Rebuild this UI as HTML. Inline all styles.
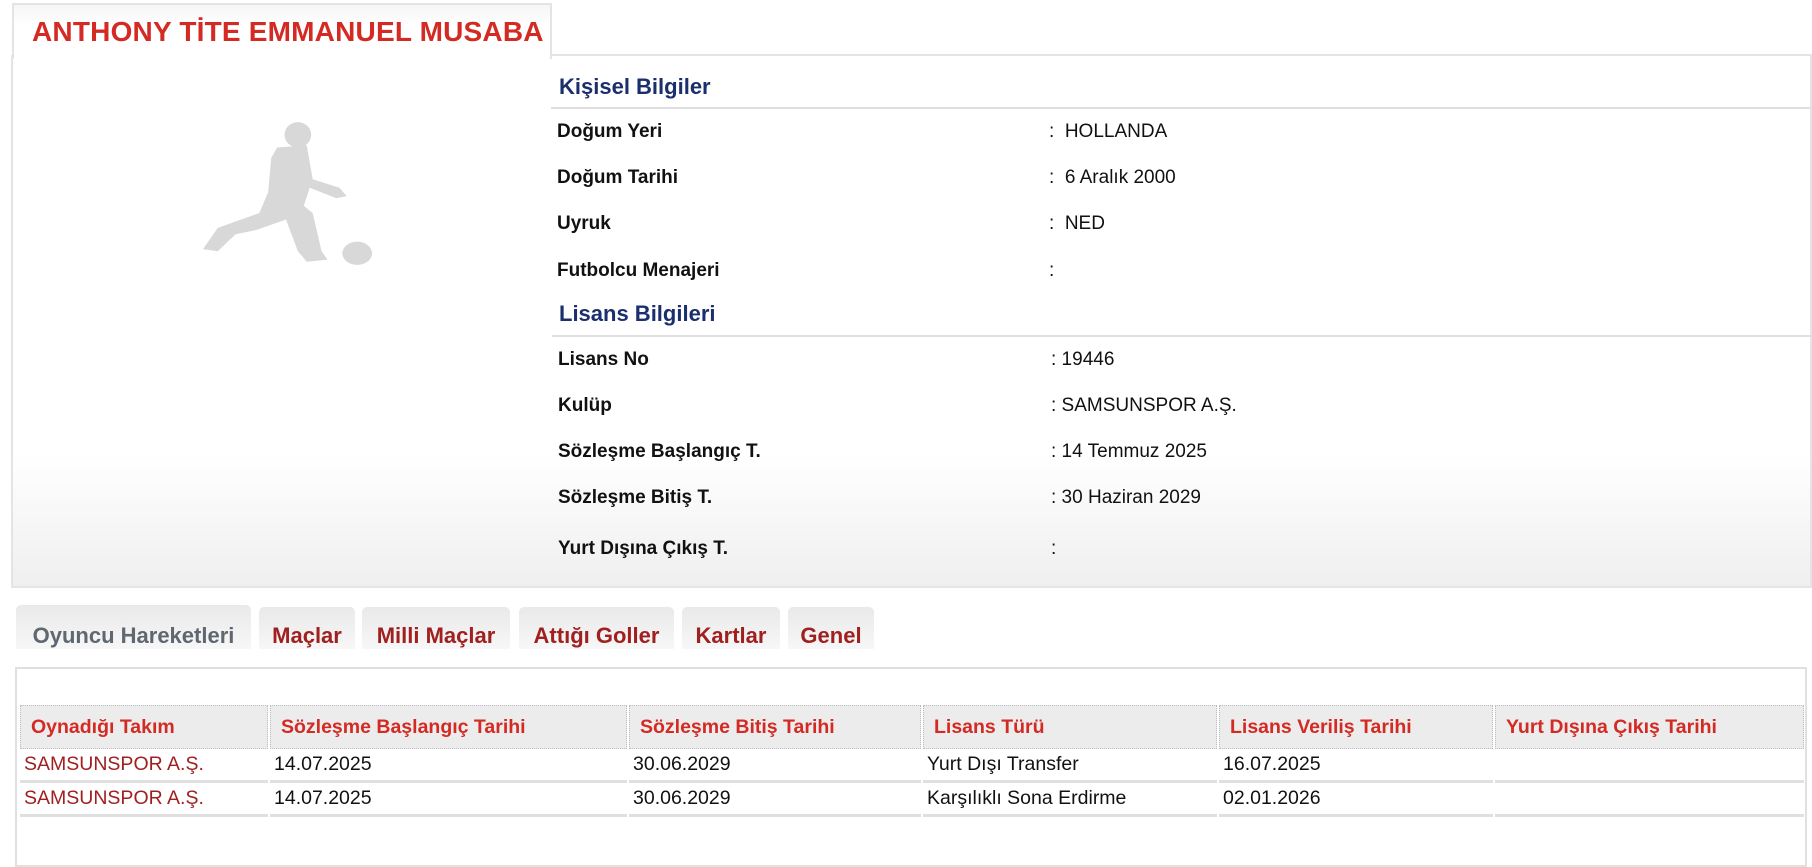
<!DOCTYPE html>
<html><head><meta charset="utf-8"><style>
*{margin:0;padding:0;box-sizing:border-box}
body{width:1812px;height:850px;background:#fff;font-family:"Liberation Sans",Arial,sans-serif;position:relative;overflow:hidden}
.a{position:absolute;white-space:nowrap}
.title{left:12px;top:3px;width:540px;height:56px;border:2px solid #e4e4e4;border-bottom:none;background:linear-gradient(#f6f6f6,#fff 40%);z-index:2}
.title span{position:absolute;left:18px;top:11px;font-weight:bold;color:#d32a23;font-size:28px;letter-spacing:0.2px}
.box{left:11px;top:55px;width:1801px;height:533px;border:2px solid #e4e4e4;border-top:none;background:linear-gradient(#fff 0%,#fff 75%,#efefef 100%)}
.boxtop{left:550px;top:54px;width:1262px;height:2px;background:#e4e4e4}
.h{font-size:22px;font-weight:bold;color:#1b2f6e}
.line{height:2px;background:#e0e0e0}
.l{font-size:19px;font-weight:bold;color:#111}
.v{font-size:19px;color:#111}
.tab{top:607px;height:42px;background:linear-gradient(#e9e9e9,#f7f7f7);border-radius:5px 5px 0 0;font-weight:bold;font-size:22px;color:#a02020;text-align:center;padding-top:16px}
.tbox{left:15px;top:667px;width:1792px;height:200px;border:2px solid #e0e0e0}
table{position:absolute;left:18px;top:705px;border-collapse:separate;border-spacing:2px 0;width:1788px}
th{height:44px;background:#ececec;border:1px dotted #bdbdbd;color:#d32a23;font-size:19.5px;text-align:left;padding-left:10px;font-weight:bold}
td{height:34px;border-bottom:3px solid #e0e0e0;font-size:19.5px;color:#111;padding-left:4px}
td.r{color:#a02020}
</style></head><body>
<div class="a box"></div>
<div class="a boxtop"></div>
<div class="a title"><span>ANTHONY TİTE EMMANUEL MUSABA</span></div>
<svg class="a" style="left:200px;top:120px" width="172" height="146" viewBox="46 4 116 138" preserveAspectRatio="none">
<g fill="#d8d8d8">
<ellipse cx="112" cy="18" rx="9" ry="12"/>
<path d="M98 30 L118 28 L122 60 L140 68 L145 76 L138 78 L120 68 L116 85 L122 92 L128 128 L132 136 L118 138 L112 128 L104 98 L84 108 L70 112 L58 128 L48 126 L58 106 L66 102 L86 92 L92 72 L94 40 Z"/>
<ellipse cx="152" cy="130" rx="10" ry="11"/>
</g></svg>
<div class="a h" style="left:559px;top:74px">Kişisel Bilgiler</div>
<div class="a line" style="left:551px;top:107px;width:1261px"></div>
<div class="a l" style="left:557px;top:121px">Doğum Yeri</div><div class="a v" style="left:1049px;top:121px">:&nbsp; HOLLANDA</div>
<div class="a l" style="left:557px;top:167px">Doğum Tarihi</div><div class="a v" style="left:1049px;top:167px">:&nbsp; 6 Aralık 2000</div>
<div class="a l" style="left:557px;top:213px">Uyruk</div><div class="a v" style="left:1049px;top:213px">:&nbsp; NED</div>
<div class="a l" style="left:557px;top:260px">Futbolcu Menajeri</div><div class="a v" style="left:1049px;top:260px">:</div>
<div class="a h" style="left:559px;top:301px">Lisans Bilgileri</div>
<div class="a line" style="left:552px;top:335px;width:1260px"></div>
<div class="a l" style="left:558px;top:349px">Lisans No</div><div class="a v" style="left:1051px;top:349px">: 19446</div>
<div class="a l" style="left:558px;top:395px">Kulüp</div><div class="a v" style="left:1051px;top:395px">: SAMSUNSPOR A.Ş.</div>
<div class="a l" style="left:558px;top:441px">Sözleşme Başlangıç T.</div><div class="a v" style="left:1051px;top:441px">: 14 Temmuz 2025</div>
<div class="a l" style="left:558px;top:487px">Sözleşme Bitiş T.</div><div class="a v" style="left:1051px;top:487px">: 30 Haziran 2029</div>
<div class="a l" style="left:558px;top:538px">Yurt Dışına Çıkış T.</div><div class="a v" style="left:1051px;top:538px">:</div>

<div class="a tab" style="left:16px;width:235px;top:605px;height:44px;color:#5f6770;padding-top:18px">Oyuncu Hareketleri</div>
<div class="a tab" style="left:259px;width:96px">Maçlar</div>
<div class="a tab" style="left:362px;width:148px">Milli Maçlar</div>
<div class="a tab" style="left:519px;width:155px">Attığı Goller</div>
<div class="a tab" style="left:682px;width:98px">Kartlar</div>
<div class="a tab" style="left:788px;width:86px">Genel</div>

<div class="a tbox"></div>
<table>
<tr><th style="width:248px">Oynadığı Takım</th><th style="width:357px">Sözleşme Başlangıç Tarihi</th><th style="width:292px">Sözleşme Bitiş Tarihi</th><th style="width:294px">Lisans Türü</th><th style="width:274px">Lisans Veriliş Tarihi</th><th>Yurt Dışına Çıkış Tarihi</th></tr>
<tr><td class="r">SAMSUNSPOR A.Ş.</td><td>14.07.2025</td><td>30.06.2029</td><td>Yurt Dışı Transfer</td><td>16.07.2025</td><td></td></tr>
<tr><td class="r">SAMSUNSPOR A.Ş.</td><td>14.07.2025</td><td>30.06.2029</td><td>Karşılıklı Sona Erdirme</td><td>02.01.2026</td><td></td></tr>
</table>
</body></html>
